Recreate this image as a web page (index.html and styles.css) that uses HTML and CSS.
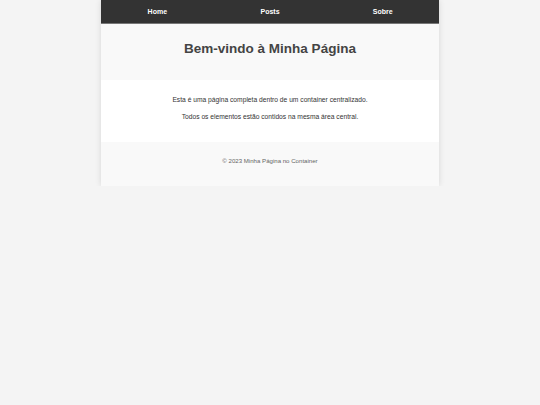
FILE: index.html
```html
<!DOCTYPE html>
<html lang="pt">
<head>
<meta charset="utf-8">
<link rel="stylesheet" href="styles.css">
</head>
<body>
<div class="container">
  <nav class="nav">
    <a class="nav-link" href="#">Home</a>
    <a class="nav-link" href="#">Posts</a>
    <a class="nav-link" href="#">Sobre</a>
  </nav>
  <header class="header">
    <h1 class="title">Bem-vindo à Minha Página</h1>
  </header>
  <main class="main">
    <p class="text">Esta é uma página completa dentro de um container centralizado.</p>
    <p class="text">Todos os elementos estão contidos na mesma área central.</p>
  </main>
  <footer class="footer">
    <p class="copy">© 2023 Minha Página no Container</p>
  </footer>
</div>
</body>
</html>
```
FILE: styles.css
```css
html, body {
  margin: 0;
  padding: 0;
}
body {
  background: #f4f4f4;
  font-family: "Liberation Sans", Arial, sans-serif;
  color: #333;
}
.container {
  width: 338px;
  margin: 0 auto;
  background: #fff;
  box-shadow: 0 0 6px rgba(0,0,0,0.12);
}
.nav {
  display: flex;
  height: 23px;
  align-items: center;
  background: #333;
  border-bottom: 1px solid #777;
}
.nav-link {
  flex: 1;
  text-align: center;
  color: #fff;
  text-decoration: none;
  font-weight: bold;
  font-size: 7px;
}
.header {
  background: #f9f9f9;
  height: 56px;
  box-sizing: border-box;
  padding-bottom: 8px;
  display: flex;
  align-items: center;
  justify-content: center;
}
.title {
  margin: 0;
  font-size: 13.5px;
  color: #444;
  font-weight: bold;
}
.main {
  background: #fff;
  height: 62px;
  box-sizing: border-box;
  padding-bottom: 6px;
  display: flex;
  flex-direction: column;
  justify-content: center;
  gap: 10px;
}
.text {
  margin: 0;
  text-align: center;
  font-size: 6.7px;
  color: #333;
}
.footer {
  background: #f9f9f9;
  height: 44px;
  box-sizing: border-box;
  padding-bottom: 8px;
  display: flex;
  align-items: center;
  justify-content: center;
}
.copy {
  margin: 0;
  font-size: 6.1px;
  color: #666;
}
```
